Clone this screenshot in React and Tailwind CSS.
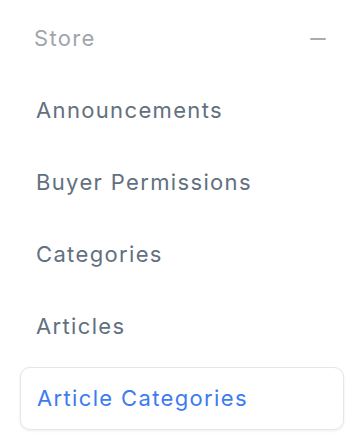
const items = ['Announcements', 'Buyer Permissions', 'Categories', 'Articles']

export default function App() {
  return (
    <div className="w-[360px] h-[442px] bg-white pl-5 pr-4 pt-[7px] overflow-hidden" style={{ fontFamily: 'Inter, "Noto Sans", sans-serif' }}>
      <div className="flex flex-col gap-[9px] text-[22px] tracking-[1.35px]">
        {/* section header */}
        <div className="h-[63px] flex items-center justify-between pl-[14px] pr-[18px]">
          <span className="text-[#a1a4ac]">Store</span>
          <span className="block w-4 h-[2px] rounded-full bg-[#a9acb3]" />
        </div>

        {items.map(label => (
          <div key={label} className="h-[63px] flex items-center px-4">
            <span className="text-[#627080]">{label}</span>
          </div>
        ))}

        <div className="h-[63px] flex items-center px-4 rounded-[10px] border border-[#e3e6ee] bg-white shadow-[0_1px_3px_rgba(15,23,42,0.08)]">
          <span className="text-[#3d7bf0]">Article Categories</span>
        </div>
      </div>
    </div>
  )
}
